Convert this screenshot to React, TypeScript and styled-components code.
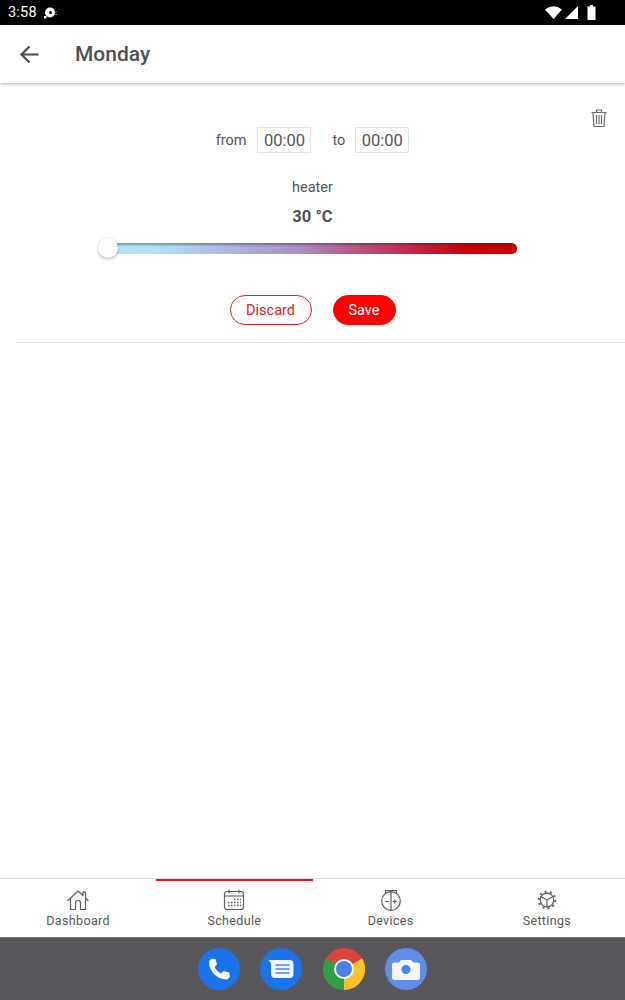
import styled, { createGlobalStyle } from "styled-components";

const GlobalStyle = createGlobalStyle`
  html, body {
    margin: 0;
    padding: 0;
    background: #ffffff;
    font-family: Roboto, "Liberation Sans", sans-serif;
  }
`;

const Screen = styled.div`
  width: 625px;
  height: 1000px;
  display: flex;
  flex-direction: column;
  overflow: hidden;
  color: #4a4a4a;
`;

const StatusBar = styled.div`
  height: 25px;
  flex: none;
  background: #000000;
  color: #ffffff;
  display: flex;
  align-items: center;
  justify-content: space-between;
  padding: 0 28px 0 8px;
  font-size: 14.5px;
  letter-spacing: 0.2px;
`;

const StatusGroup = styled.div<{ $gap: number }>`
  display: flex;
  align-items: center;
  gap: ${(p) => p.$gap}px;
`;

const AppBar = styled.header`
  height: 58px;
  flex: none;
  display: flex;
  align-items: center;
  background: #ffffff;
  box-shadow: 0 1px 3px rgba(0, 0, 0, 0.3);
  padding-left: 19px;
  gap: 35px;
  position: relative;
`;

const Title = styled.h1`
  margin: 0;
  font-size: 21px;
  font-weight: 500;
  color: #4f4f4f;
`;

const Content = styled.main`
  flex: 1;
  padding-left: 16px;
`;

const Entry = styled.section`
  height: 260px;
  box-sizing: border-box;
  border-bottom: 1px solid #e4e4e4;
  display: flex;
  flex-direction: column;
  align-items: center;
  padding-right: 16px;
  position: relative;
`;

const DeleteButton = styled.div`
  position: absolute;
  top: 26px;
  right: 18px;
  display: flex;
`;

const TimeRow = styled.div`
  margin-top: 44px;
  height: 26px;
  display: flex;
  align-items: center;
`;

const TimeLabel = styled.span<{ $left: number; $right: number }>`
  font-size: 14.5px;
  color: #555555;
  margin-left: ${(p) => p.$left}px;
  margin-right: ${(p) => p.$right}px;
`;

const TimeBox = styled.div`
  width: 54px;
  height: 26px;
  box-sizing: border-box;
  border: 1px solid #e2e2e2;
  display: flex;
  align-items: center;
  justify-content: center;
  font-size: 16.5px;
  color: #555555;
`;

const DeviceName = styled.div`
  margin-top: 25px;
  font-size: 14.5px;
  line-height: 20px;
  color: #555555;
`;

const Temperature = styled.div`
  margin-top: 9px;
  font-size: 16.5px;
  line-height: 20px;
  font-weight: 700;
  color: #505050;
`;

const SliderTrack = styled.div`
  margin-top: 16px;
  margin-left: 1px;
  width: 407px;
  height: 11px;
  flex: none;
  border-radius: 0 6px 6px 0;
  background: linear-gradient(90deg, #b3e6fd 0%, #aee0f8 12%, #ab8bc4 47%, #bd5080 61%, #c62040 76%, #cc0000 88%, #cc0000 100%);
  box-shadow: inset 0 2px 2px rgba(40, 40, 40, 0.4);
  position: relative;
`;

const SliderThumb = styled.div`
  position: absolute;
  left: -12px;
  top: -5px;
  width: 20px;
  height: 20px;
  border-radius: 50%;
  background: #ffffff;
  box-shadow: 0 1px 3px rgba(0, 0, 0, 0.35);
`;

const Actions = styled.div`
  margin-top: 41px;
  display: flex;
  gap: 21px;
`;

const PillButton = styled.button<{ $filled?: boolean }>`
  height: 30px;
  width: ${(p) => (p.$filled ? 63 : 82)}px;
  box-sizing: border-box;
  padding: 0;
  border-radius: 15px;
  border: 1px solid ${(p) => (p.$filled ? "#ff0000" : "#e02020")};
  background: ${(p) => (p.$filled ? "#ff0000" : "#ffffff")};
  color: ${(p) => (p.$filled ? "#ffffff" : "#e02020")};
  font-family: inherit;
  font-size: 14.5px;
`;

const BottomNav = styled.nav`
  height: 59px;
  flex: none;
  box-sizing: border-box;
  border-top: 1px solid #e2e2e2;
  display: grid;
  grid-template-columns: repeat(4, 1fr);
  background: #ffffff;
`;

const NavItem = styled.div<{ $active?: boolean }>`
  display: flex;
  flex-direction: column;
  align-items: center;
  padding-top: 10px;
  gap: 2px;
  font-size: 12.5px;
  letter-spacing: 0.35px;
  color: #555555;
  position: relative;

  &::before {
    content: "";
    display: ${(p) => (p.$active ? "block" : "none")};
    position: absolute;
    left: 0;
    right: 0;
    top: 0;
    height: 2px;
    background: #e4141e;
  }
`;

const NavIcon = styled.svg`
  width: 22px;
  height: 22px;
  fill: none;
  stroke: #5c5c5c;
  stroke-width: 1.2;
  stroke-linecap: round;
  stroke-linejoin: round;
`;

const Dock = styled.div`
  height: 63px;
  flex: none;
  background: #5a575c;
  display: flex;
  justify-content: center;
  align-items: center;
  gap: 20.6px;
  padding-bottom: 1px;
  border-top: 1px solid #777;
  box-sizing: border-box;
`;

const DockIcon = styled.svg`
  width: 42px;
  height: 42px;
  flex: none;
`;

function HomeIcon() {
  return (
    <NavIcon viewBox="0 0 22 22">
      <path d="M1 11.5 11 2l5 4.5V3.2h2.5v5.6L21 11.5" />
      <path d="M3.5 9.5V20.5H8.5V14a2.5 2.5 0 0 1 5 0v6.5h5V9.5" />
    </NavIcon>
  );
}

function CalendarIcon() {
  return (
    <NavIcon viewBox="0 0 22 22">
      <rect x="1.5" y="2.5" width="19" height="18" rx="2.5" />
      <path d="M1.5 7h19M6 1v3M16 1v3" />
      <path
        strokeWidth="1.5"
        strokeLinecap="butt"
        strokeDasharray="1.5 1.5"
        d="M11 10.500h7M5 13.500h13M5 16.500h13"
      />
    </NavIcon>
  );
}

function BulbIcon() {
  return (
    <NavIcon viewBox="0 0 22 22">
      <circle cx="11" cy="12" r="9.3" />
      <path d="M5.5 4.5V1.5h11v3M11 2.8V21.300M5.500 12.500h3M13 12.500h3.500M14.800 10.800v3.400" />
    </NavIcon>
  );
}

function GearIcon() {
  return (
    <NavIcon viewBox="0 0 22 22">
      <circle cx="11" cy="11" r="6.800" />
      <circle cx="11" cy="11" r="8.300" strokeWidth="2" strokeLinecap="butt" strokeDasharray="2 3.215" />
      <path d="M11 11v6.800M11 11 5.100 7.600M11 11l5.900-3.400" />
    </NavIcon>
  );
}

export default function App() {
  return (
    <Screen>
      <GlobalStyle />
      <StatusBar>
        <StatusGroup $gap={6}>
          <span>3:58</span>
          <svg width="14" height="14" viewBox="0 0 14 14">
            <circle cx="7" cy="6.500" r="5" fill="#ffffff" />
            <circle cx="7.500" cy="6.500" r="1.500" fill="#000000" />
            <path d="M1 10h2.500v2.500H1z" fill="#ffffff" />
            <path d="M13 5.500v1M13 8v1" stroke="#ffffff" strokeWidth="1" />
          </svg>
        </StatusGroup>
        <StatusGroup $gap={3}>
          <svg width="17" height="13" viewBox="0 0 17 13">
            <path d="M0 3.500Q8.500-3 17 3.500L8.500 13z" fill="#ffffff" />
          </svg>
          <svg width="14" height="13" viewBox="0 0 14 13">
            <path d="M0 13 13 0v13z" fill="#ffffff" />
          </svg>
          <svg width="10" height="15" viewBox="0 0 10 15" style={{ marginLeft: 5 }}>
            <path d="M3 0h3v1.500h2.500V15H.500V1.500H3z" fill="#ffffff" />
          </svg>
        </StatusGroup>
      </StatusBar>

      <AppBar>
        <svg width="21" height="21" viewBox="0 0 21 21" fill="none" stroke="#4a4a4a" strokeWidth="2.200">
          <path d="M19.500 10.500H2.500M10.500 2.500l-8 8 8 8" />
        </svg>
        <Title>Monday</Title>
      </AppBar>

      <Content>
        <Entry>
          <DeleteButton>
            <svg width="16" height="18" viewBox="0 0 16 18" fill="none" stroke="#6a6a6a" strokeWidth="1.200">
              <path d="M.500 3.500h15M5.500 3.500V1h5v2.500M2 3.500l1 14h10l1-14M5.500 6v9M8 6v9M10.500 6v9" />
            </svg>
          </DeleteButton>
          <TimeRow>
            <TimeLabel $left={0} $right={11}>from</TimeLabel>
            <TimeBox>00:00</TimeBox>
            <TimeLabel $left={21} $right={10}>to</TimeLabel>
            <TimeBox>00:00</TimeBox>
          </TimeRow>
          <DeviceName>heater</DeviceName>
          <Temperature>30 °C</Temperature>
          <SliderTrack>
            <SliderThumb />
          </SliderTrack>
          <Actions>
            <PillButton>Discard</PillButton>
            <PillButton $filled>Save</PillButton>
          </Actions>
        </Entry>
      </Content>

      <BottomNav>
        <NavItem>
          <HomeIcon />
          Dashboard
        </NavItem>
        <NavItem $active>
          <CalendarIcon />
          Schedule
        </NavItem>
        <NavItem>
          <BulbIcon />
          Devices
        </NavItem>
        <NavItem>
          <GearIcon />
          Settings
        </NavItem>
      </BottomNav>

      <Dock>
        <DockIcon viewBox="0 0 42 42">
          <circle cx="21" cy="21" r="21" fill="#1a73e8" />
          <path
            d="M14.500 10.500c-2 .500-3.500 2-3.500 4 .500 9 8 16.500 17 17 2 0 3.500-1.500 4-3.500l-1-3.500-5.500-1.500-2.500 2.500c-2.800-1.400-5.100-3.700-6.500-6.500l2.500-2.500-1.500-5.500z"
            fill="#ffffff"
          />
        </DockIcon>
        <DockIcon viewBox="0 0 42 42">
          <circle cx="21" cy="21" r="21" fill="#1a73e8" />
          <path d="M8.500 12h21a4 4 0 0 1 4 4v10a4 4 0 0 1-4 4H15a4 4 0 0 1-4-4V15.500z" fill="#f4f6fb" />
          <path d="M15.500 17h14M15.500 21h14M15.500 25h14" stroke="#6fa0ee" strokeWidth="1.800" />
        </DockIcon>
        <DockIcon viewBox="0 0 42 42">
          <circle cx="21" cy="21" r="21" fill="#db4437" />
          <path d="M21 21 39.200 10.500A21 21 0 0 1 21 42z" fill="#fbc02d" />
          <path d="M21 21 21 42A21 21 0 0 1 2.800 10.500z" fill="#2e9e48" />
          <circle cx="21" cy="21" r="10" fill="#ffffff" />
          <circle cx="21" cy="21" r="8" fill="#4a80ec" />
        </DockIcon>
        <DockIcon viewBox="0 0 42 42">
          <circle cx="21" cy="21" r="21" fill="#5f8fe8" />
          <path d="M16 12h10l2 2.500h4.500a2.500 2.500 0 0 1 2.500 2.500v12.500a2.500 2.500 0 0 1-2.500 2.500h-23A2.500 2.500 0 0 1 7 29.500V17a2.500 2.500 0 0 1 2.500-2.500H14z" fill="#f5f5f5" />
          <circle cx="21" cy="21.500" r="4.500" fill="#4a80ec" />
        </DockIcon>
      </Dock>
    </Screen>
  );
}
